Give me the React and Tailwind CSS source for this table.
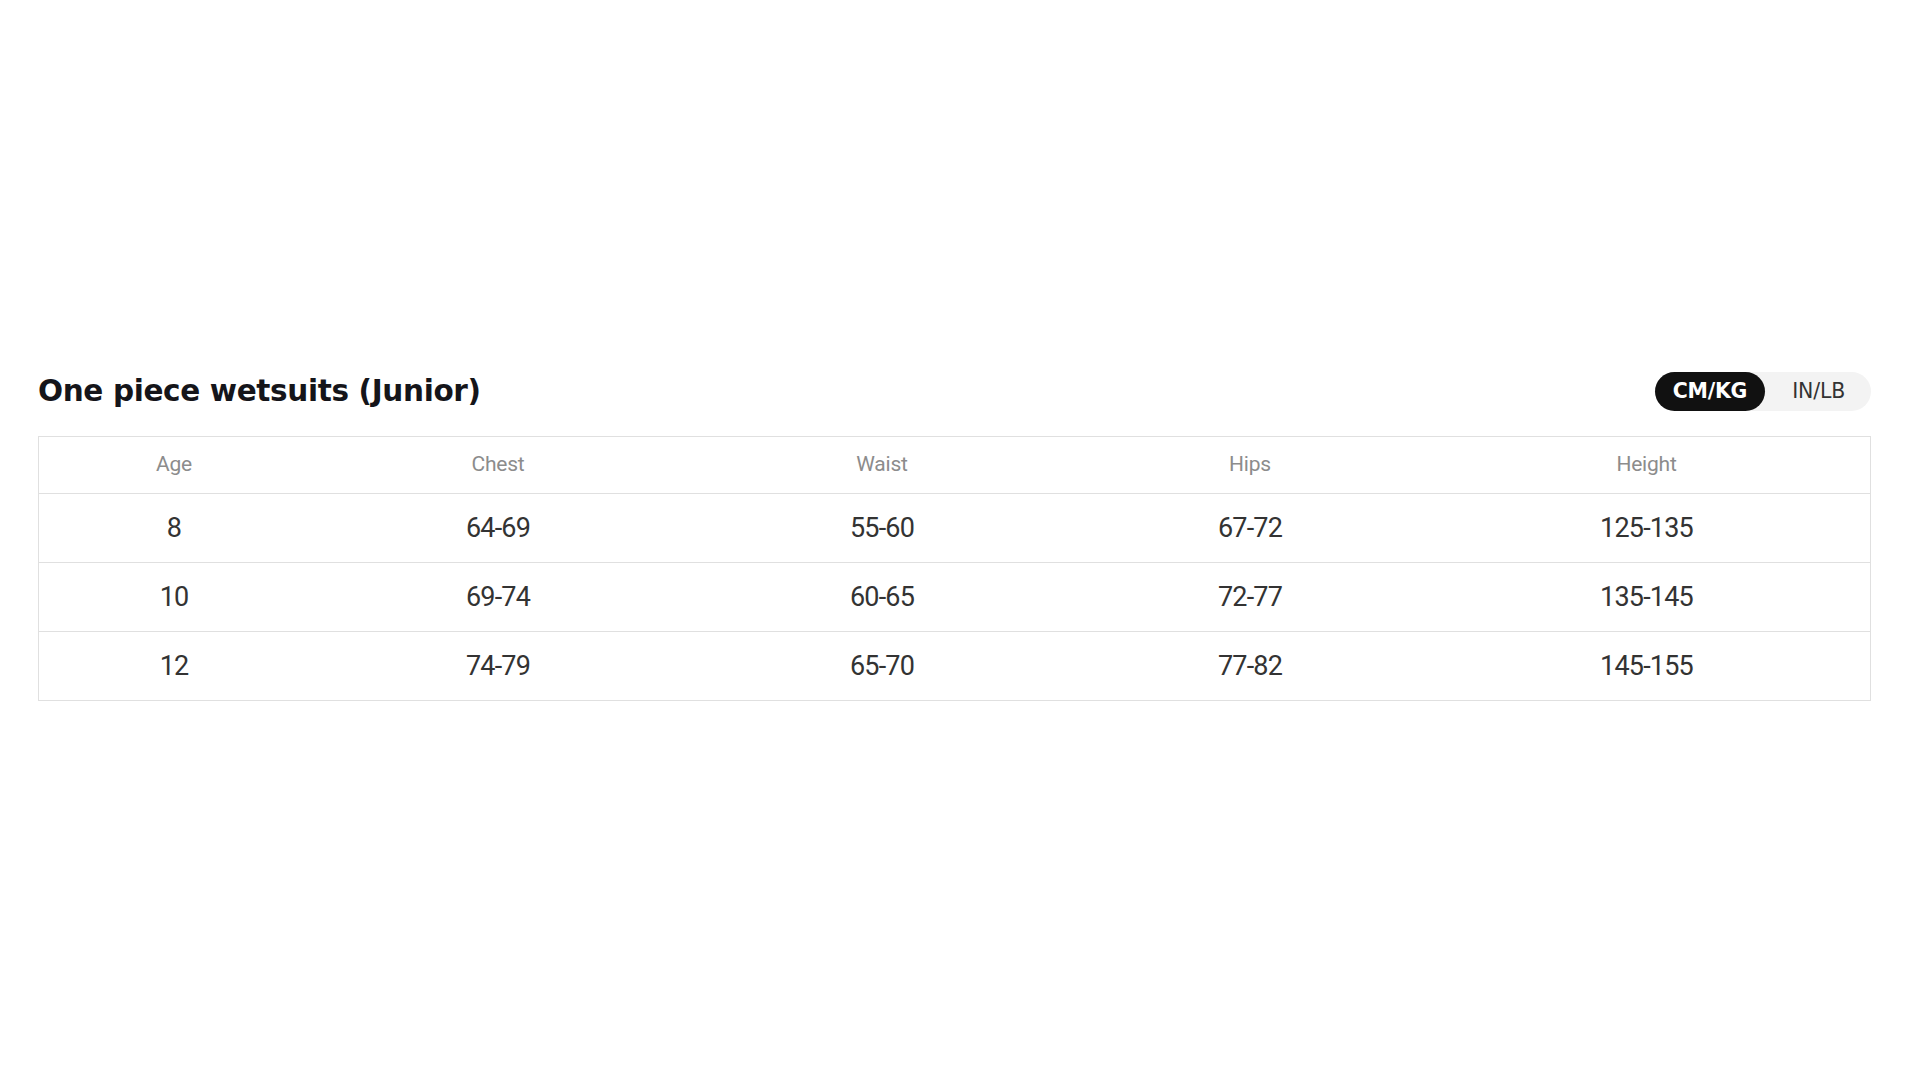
import React, { useState } from "react";

const rows = [
  ["8", "64-69", "55-60", "67-72", "125-135"],
  ["10", "69-74", "60-65", "72-77", "135-145"],
  ["12", "74-79", "65-70", "77-82", "145-155"],
];

const headers = ["Age", "Chest", "Waist", "Hips", "Height"];

export default function App() {
  const [unit, setUnit] = useState("cm");

  return (
    <div className="min-h-screen w-full bg-white font-['Roboto',sans-serif] pt-[371px] pl-[38px] pr-[49px]">
      <div className="flex items-center justify-between h-[40px] mb-[25px]">
        <h2 className="font-['DejaVu_Sans',sans-serif] text-[29.5px] font-bold tracking-[-0.012em] text-[#15151a] leading-none pt-[2px]">
          One piece wetsuits (Junior)
        </h2>
        <div className="flex items-center h-[39px] rounded-full bg-[#f3f3f3] font-['DejaVu_Sans',sans-serif]">
          <button
            onClick={() => setUnit("cm")}
            className={`h-full px-[18px] rounded-full text-[20.5px] font-bold tracking-[-0.01em] ${
              unit === "cm" ? "bg-[#111] text-white" : "text-[#333]"
            }`}
          >
            CM/KG
          </button>
          <button
            onClick={() => setUnit("in")}
            className={`h-full pl-[27px] pr-[26px] rounded-full text-[20.5px] tracking-[-0.01em] ${
              unit === "in" ? "bg-[#111] text-white" : "text-[#333]"
            }`}
          >
            IN/LB
          </button>
        </div>
      </div>

      <div className="border border-[#e0e0e0]">
        <div className="grid grid-cols-[270px_378px_390px_346px_1fr] h-[56px] items-center text-[#8c8c8c] text-[21px] tracking-[-0.01em]">
          {headers.map((h) => (
            <div key={h} className="text-center">{h}</div>
          ))}
        </div>
        {rows.map((r) => (
          <div
            key={r[0]}
            className="grid grid-cols-[270px_378px_390px_346px_1fr] h-[69px] items-center border-t border-[#e0e0e0] text-[#333] text-[27px] tracking-[-0.03em]"
          >
            {r.map((c, i) => (
              <div key={i} className="text-center">{c}</div>
            ))}
          </div>
        ))}
      </div>
    </div>
  );
}
